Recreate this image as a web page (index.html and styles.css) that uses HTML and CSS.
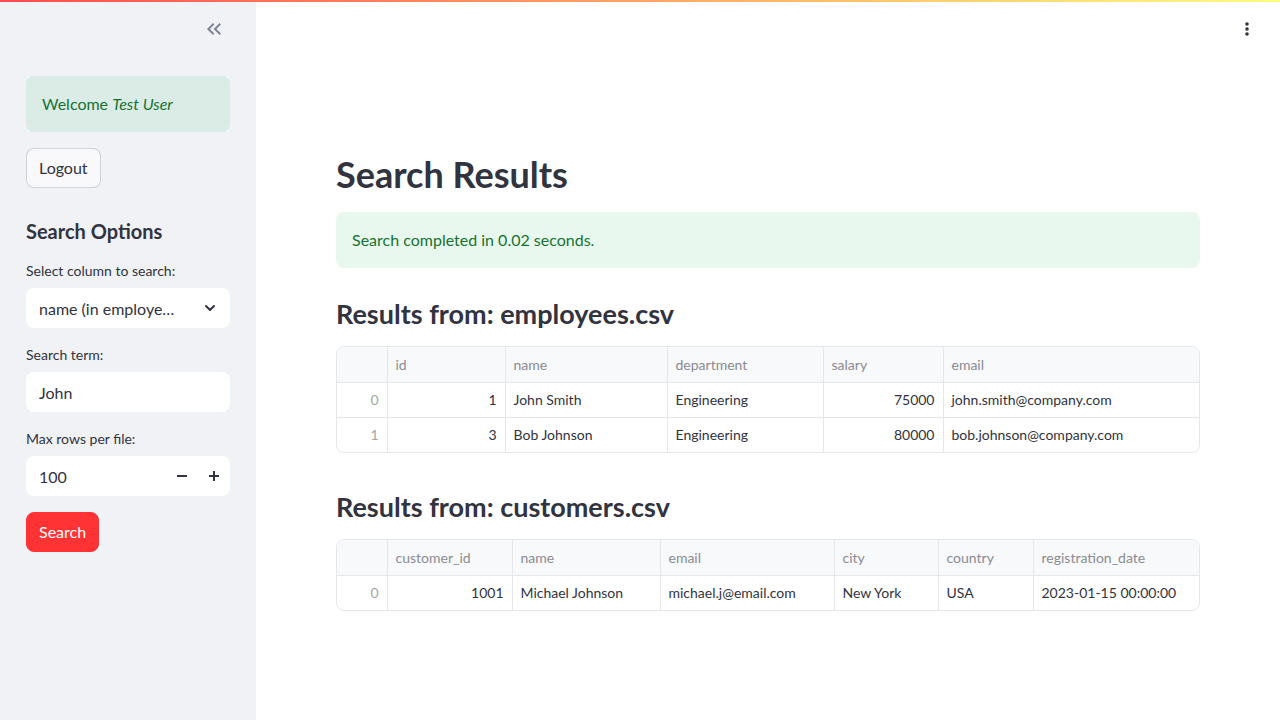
FILE: index.html
```html
<!DOCTYPE html>
<html lang="en">
<head>
    <meta charset="UTF-8">
    <meta name="viewport" content="width=device-width, initial-scale=1.0">
    <title>CSV Search</title>
    <link rel="stylesheet" href="styles.css">
</head>
<body>

    <!-- Faixa colorida do topo -->
    <div class="decoration"></div>

    <div class="app">

        <!-- Barra lateral -->
        <aside class="sidebar">
            <div class="sidebar-top">
                <button class="icon-btn" title="Collapse sidebar">
                    <svg width="24" height="24" viewBox="0 0 24 24">
                        <path fill="#808495" d="M17.59 18L19 16.59 14.42 12 19 7.41 17.59 6l-6 6zM11 18l1.41-1.41L7.83 12l4.58-4.59L11 6l-6 6z"/>
                    </svg>
                </button>
            </div>

            <div class="alert alert-sidebar">Welcome <em>Test User</em></div>

            <button class="btn">Logout</button>

            <h3 class="sidebar-title">Search Options</h3>

            <label class="field-label">Select column to search:</label>
            <div class="field select">
                <span class="select-value">name (in employe…</span>
                <svg width="16" height="16" viewBox="0 0 24 24" fill="none" stroke="#31333f" stroke-width="3" stroke-linecap="round" stroke-linejoin="round">
                    <polyline points="6 9 12 15 18 9"></polyline>
                </svg>
            </div>

            <label class="field-label">Search term:</label>
            <div class="field">John</div>

            <label class="field-label">Max rows per file:</label>
            <div class="field number">
                <span class="number-value">100</span>
                <span class="step">
                    <svg width="10" height="10" viewBox="0 0 10 10"><rect x="0" y="4" width="10" height="2" fill="#31333f"/></svg>
                </span>
                <span class="step">
                    <svg width="10" height="10" viewBox="0 0 10 10"><rect x="0" y="4" width="10" height="2" fill="#31333f"/><rect x="4" y="0" width="2" height="10" fill="#31333f"/></svg>
                </span>
            </div>

            <button class="btn btn-primary">Search</button>
        </aside>

        <!-- Conteúdo principal -->
        <main class="main">
            <div class="main-menu">
                <svg width="4" height="14" viewBox="0 0 4 14">
                    <circle cx="2" cy="2" r="1.8" fill="#31333f"/>
                    <circle cx="2" cy="7" r="1.8" fill="#31333f"/>
                    <circle cx="2" cy="12" r="1.8" fill="#31333f"/>
                </svg>
            </div>

            <div class="content">
                <h1>Search Results</h1>

                <div class="alert alert-main">Search completed in 0.02 seconds.</div>

                <h2>Results from: employees.csv</h2>
                <div class="table-wrap">
                    <table class="data">
                        <colgroup>
                            <col style="width:50px">
                            <col style="width:118px">
                            <col style="width:162px">
                            <col style="width:156px">
                            <col style="width:120px">
                            <col>
                        </colgroup>
                        <thead>
                            <tr><th></th><th>id</th><th>name</th><th>department</th><th>salary</th><th>email</th></tr>
                        </thead>
                        <tbody>
                            <tr><td class="idx">0</td><td class="num">1</td><td>John Smith</td><td>Engineering</td><td class="num">75000</td><td>john.smith@company.com</td></tr>
                            <tr><td class="idx">1</td><td class="num">3</td><td>Bob Johnson</td><td>Engineering</td><td class="num">80000</td><td>bob.johnson@company.com</td></tr>
                        </tbody>
                    </table>
                </div>

                <h2>Results from: customers.csv</h2>
                <div class="table-wrap">
                    <table class="data">
                        <colgroup>
                            <col style="width:50px">
                            <col style="width:125px">
                            <col style="width:148px">
                            <col style="width:174px">
                            <col style="width:104px">
                            <col style="width:95px">
                            <col>
                        </colgroup>
                        <thead>
                            <tr><th></th><th>customer_id</th><th>name</th><th>email</th><th>city</th><th>country</th><th>registration_date</th></tr>
                        </thead>
                        <tbody>
                            <tr><td class="idx">0</td><td class="num">1001</td><td>Michael Johnson</td><td>michael.j@email.com</td><td>New York</td><td>USA</td><td>2023-01-15 00:00:00</td></tr>
                        </tbody>
                    </table>
                </div>
            </div>
        </main>
    </div>

</body>
</html>
```

FILE: styles.css
```css
* {
    box-sizing: border-box;
}

body {
    margin: 0;
    font-family: 'Lato', 'Open Sans', sans-serif;
    color: #31333f;
    background: #ffffff;
    height: 720px;
    overflow: hidden;
}

.decoration {
    position: absolute;
    top: 0;
    left: 0;
    right: 0;
    height: 2px;
    background: linear-gradient(90deg, #ff4b4b, #fffd80);
    z-index: 10;
}

.app {
    display: flex;
    height: 720px;
}

/* Barra lateral */
.sidebar {
    width: 256px;
    flex-shrink: 0;
    background: #f0f2f6;
    padding: 0 26px;
    display: flex;
    flex-direction: column;
    align-items: flex-start;
}

.sidebar-top {
    width: 100%;
    height: 58px;
    display: flex;
    justify-content: flex-end;
    align-items: center;
    padding-right: 4px;
}

.icon-btn {
    background: none;
    border: none;
    padding: 0;
    display: flex;
    cursor: pointer;
}

.alert {
    border-radius: 8px;
    padding: 16px;
    font-size: 16px;
    line-height: 24px;
    color: #177233;
}

.alert-sidebar {
    width: 100%;
    margin-top: 18px;
    background: #dbece6;
}

.btn {
    font-family: inherit;
    font-size: 16px;
    line-height: 24px;
    color: #31333f;
    background: #f9f9fb;
    border: 1px solid rgba(49, 51, 63, 0.2);
    border-radius: 8px;
    padding: 7px 12px;
    margin-top: 16px;
    cursor: pointer;
}

.btn-primary {
    background: #ff3333;
    border-color: #ff3333;
    color: #ffffff;
    margin-top: 16px;
}

.sidebar-title {
    font-size: 20px;
    font-weight: 700;
    line-height: 28px;
    margin: 29px 0 0;
}

.field-label {
    font-size: 14px;
    line-height: 20px;
    margin-top: 17px;
    margin-bottom: 7px;
}

.sidebar-title + .field-label {
    margin-top: 16px;
}

.field {
    width: 100%;
    height: 40px;
    background: #ffffff;
    border-radius: 8px;
    padding: 0 13px;
    display: flex;
    align-items: center;
    font-size: 16px;
}

.select {
    justify-content: space-between;
    padding-right: 12px;
}

.select-value {
    white-space: nowrap;
}

.number {
    padding-right: 0;
}

.number-value {
    flex: 1;
}

.step {
    width: 32px;
    height: 40px;
    display: flex;
    align-items: center;
    justify-content: center;
}

/* Conteúdo principal */
.main {
    flex: 1;
    position: relative;
    padding: 0 80px;
}

.main-menu {
    position: absolute;
    top: 22px;
    right: 31px;
    display: flex;
}

.content {
    padding-top: 151px;
}

h1 {
    font-size: 36px;
    font-weight: 700;
    line-height: 46px;
    margin: 0;
}

.alert-main {
    margin-top: 15px;
    background: #e8f8ee;
}

h2 {
    font-size: 27px;
    font-weight: 700;
    line-height: 36px;
    margin: 28px 0 14px;
}

.table-wrap + h2 {
    margin-top: 36px;
}

.table-wrap {
    border: 1px solid #e6e7ea;
    border-radius: 8px;
    overflow: hidden;
}

.data {
    width: 100%;
    border-collapse: collapse;
    table-layout: fixed;
    font-size: 14px;
}

.data th,
.data td {
    height: 35px;
    padding: 0 8px;
    border-left: 1px solid #e6e7ea;
    border-top: 1px solid #e6e7ea;
    text-align: left;
    font-weight: 400;
    white-space: nowrap;
}

.data th {
    background: #f8f9fb;
    color: #8a8b93;
    border-top: none;
}

.data th:first-child,
.data td:first-child {
    border-left: none;
}

.data td.num,
.data td.idx {
    text-align: right;
}

.data td.idx {
    color: #a3a4aa;
}
```
